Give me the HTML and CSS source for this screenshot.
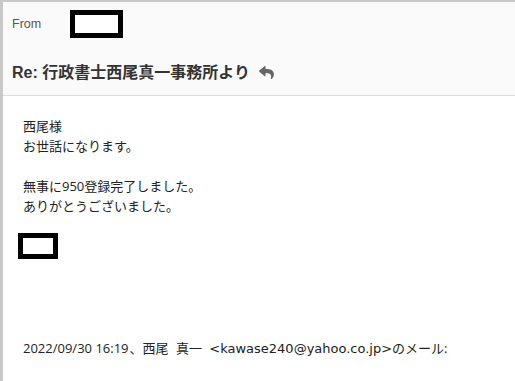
FILE: index.html
```html
<!DOCTYPE html>
<html lang="ja">
<head>
<meta charset="utf-8">
<link rel="stylesheet" href="styles.css">
</head>
<body>
<div class="mail">
  <div class="header">
    <div class="from-row">
      <span class="from-label">From</span>
      <span class="redact redact-from"></span>
    </div>
    <div class="subject-row">
      <h1 class="subject">Re: 行政書士西尾真一事務所より</h1>
      <svg class="reply-icon" viewBox="0 0 512 448" width="15" height="13" aria-hidden="true">
        <path fill="#666" d="M8.3 157.8L184.3 5.9C199.7-7.5 224 3.3 224 24v80c160.6 1.8 288 34 288 186.3 0 61.4-39.6 122.3-83.3 154.1-13.7 9.9-33.1-2.5-28.1-18.6 45.3-145-21.5-183.5-176.6-185.7V328c0 20.7-24.3 31.5-39.7 18.2l-176-152c-11.1-9.6-11.1-26.8 0-36.4z"/>
      </svg>
    </div>
  </div>
  <div class="content">
    <p class="line">西尾様</p>
    <p class="line">お世話になります。</p>
    <p class="line">&nbsp;</p>
    <p class="line">無事に950登録完了しました。</p>
    <p class="line">ありがとうございました。</p>
    <span class="redact redact-sign"></span>
    <p class="line quote"><span class="date">2022/09/30 16:19</span>、西尾 真一 <span class="addr">&lt;kawase240@yahoo.co.jp&gt;</span>のメール:</p>
  </div>
</div>
</body>
</html>
```
FILE: styles.css
```css
html, body {
  margin: 0;
  padding: 0;
  background: #ffffff;
}
.mail {
  box-sizing: border-box;
  height: 381px;
  border-top: 2px solid #c9c9c9;
  border-left: 3px solid #c9c9c9;
  font-family: "Open Sans", "Noto Sans CJK JP", sans-serif;
}
.header {
  background: #fafafa;
  padding: 8px 0 12px 9px;
  border-bottom: 1px solid #dddddd;
}
.from-row {
  display: flex;
  align-items: center;
  height: 28px;
}
.from-label {
  width: 58px;
  font-family: "Liberation Sans", Arial, sans-serif;
  font-size: 12.5px;
  color: #555555;
}
.redact {
  display: block;
  box-sizing: border-box;
  border: 5px solid #000000;
  background: #ffffff;
}
.redact-from {
  width: 53px;
  height: 28px;
}
.subject-row {
  display: flex;
  align-items: center;
  margin-top: 25px;
  height: 20px;
}
.subject {
  margin: 0;
  font-family: "Liberation Sans", "Noto Sans CJK JP", sans-serif;
  font-size: 16px;
  font-weight: bold;
  line-height: 20px;
  color: #333333;
}
.reply-icon {
  margin-left: 9px;
  margin-top: -2px;
}
.content {
  padding: 20px 0 0 20px;
}
.line {
  margin: 0;
  font-size: 13px;
  line-height: 20px;
  color: #222222;
  white-space: nowrap;
}
.redact-sign {
  width: 40px;
  height: 26px;
  margin: 17px 0 0 -5px;
}
.quote {
  margin-top: 79px;
  word-spacing: 4px;
}
.date {
  word-spacing: 0;
  margin-right: 1px;
}
.addr {
  font-family: "DejaVu Sans", sans-serif;
  font-size: 13px;
  word-spacing: 0;
}
```
